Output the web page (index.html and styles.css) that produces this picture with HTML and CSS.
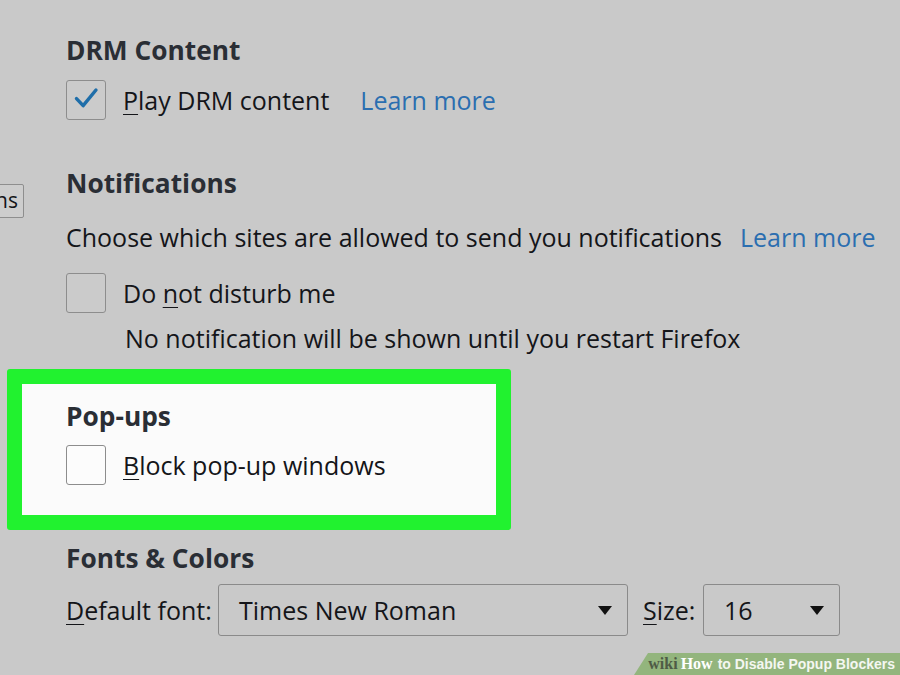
FILE: index.html
```html
<!DOCTYPE html>
<html lang="en">
<head>
<meta charset="utf-8">
<title>Firefox preferences</title>
<link rel="stylesheet" href="styles.css">
</head>
<body>
<div class="page">
  <aside class="sidebar">
    <button class="side-btn">ns</button>
  </aside>
  <main class="content">
    <section class="group drm">
      <h2 class="heading">DRM Content</h2>
      <div class="row check-row">
        <span class="checkbox checked">
          <svg viewBox="0 0 40 40" width="38" height="38"><path d="M10 18.5 L17 26 L30.5 9.5" fill="none" stroke="#1f6ea9" stroke-width="3.6" stroke-linecap="round" stroke-linejoin="round"/></svg>
        </span>
        <span class="label"><u>P</u>lay DRM content</span>
        <a class="link gap-link">Learn more</a>
      </div>
    </section>

    <section class="group notif">
      <h2 class="heading">Notifications</h2>
      <div class="row desc-row">
        <span class="label">Choose which sites are allowed to send you notifications</span>
        <a class="link">Learn more</a>
      </div>
      <div class="row check-row dnd">
        <span class="checkbox"></span>
        <span class="label">Do <u>n</u>ot disturb me</span>
      </div>
      <div class="row note">No notification will be shown until you restart Firefox</div>
    </section>

    <section class="group popups">
      <h2 class="heading">Pop-ups</h2>
      <div class="row check-row">
        <span class="checkbox white"></span>
        <span class="label"><u>B</u>lock pop-up windows</span>
      </div>
    </section>

    <section class="group fonts">
      <h2 class="heading">Fonts &amp; Colors</h2>
      <div class="row font-row">
        <span class="label font-label"><u>D</u>efault font:</span>
        <span class="select font-select"><span class="value">Times New Roman</span><span class="arrow"></span></span>
        <span class="label size-label"><u>S</u>ize:</span>
        <span class="select size-select"><span class="value">16</span><span class="arrow"></span></span>
      </div>
    </section>
  </main>
</div>
<div class="wiki-badge"><span class="wiki">wiki</span><span class="how">How</span><span class="title">to Disable Popup Blockers</span></div>
</body>
</html>
```
FILE: styles.css
```css
html, body {
  margin: 0;
  padding: 0;
}
body {
  background: #c9c9c9;
  font-family: "Open Sans", "Noto Sans", sans-serif;
  color: #141519;
  width: 900px;
  height: 675px;
  overflow: hidden;
  position: relative;
}
.page {
  display: flex;
}
.sidebar {
  width: 66px;
  flex: none;
}
.side-btn {
  margin-top: 184px;
  margin-left: -22px;
  width: 46px;
  height: 34px;
  border: 1px solid #8e8e8e;
  border-radius: 2px;
  background: #cdcdcd;
  font-family: "Open Sans", "Noto Sans", sans-serif;
  font-size: 21px;
  color: #141519;
  text-align: right;
  padding: 0 5px 2px 0;
  line-height: 30px;
}
.content {
  flex: 1;
  display: flex;
  flex-direction: column;
}
.heading {
  margin: 0;
  font-size: 26.3px;
  font-weight: 700;
  color: #2a2e35;
  height: 40px;
  line-height: 40px;
}
.row {
  display: flex;
  align-items: center;
  font-size: 25px;
  white-space: nowrap;
}
.check-row {
  height: 40px;
}
.checkbox {
  width: 38px;
  height: 38px;
  border: 1px solid #8d8d8d;
  border-radius: 3px;
  background: #cbcbcb;
  display: flex;
  align-items: center;
  justify-content: center;
  flex: none;
  margin-right: 17px;
}
.checkbox.white {
  background: #fcfcfc;
}
.checkbox svg {
  display: block;
}
.label u {
  text-decoration-thickness: 1px;
  text-underline-offset: 4px;
}
.link {
  color: #2b6eb0;
  cursor: pointer;
}
.gap-link {
  margin-left: 31px;
}
.drm {
  padding-top: 30px;
}
.drm .heading {
  margin-bottom: 10px;
}
.notif {
  margin-top: 43px;
}
.desc-row {
  height: 40px;
  margin-top: 14px;
}
.desc-row .link {
  margin-left: 18px;
}
.dnd {
  margin-top: 16px;
}
.note {
  height: 40px;
  margin-top: 5px;
  padding-left: 59px;
}
.popups {
  margin-top: 11px;
  margin-left: -59px;
  width: 430px;
  border: 15px solid #21f22f;
  border-radius: 3px;
  background: #fbfbfb;
  padding: 12px 0 30px 44px;
  box-sizing: content-box;
}
.popups .check-row {
  margin-top: 9px;
}
.fonts {
  margin-top: 8px;
}
.font-row {
  margin-top: 6px;
  height: 52px;
}
.font-label {
  width: 152px;
  flex: none;
}
.select {
  height: 50px;
  border: 1px solid #8a8a8a;
  border-radius: 3px;
  display: flex;
  align-items: center;
  box-sizing: content-box;
  flex: none;
}
.font-select {
  width: 408px;
}
.size-select {
  width: 135px;
}
.size-label {
  width: 60px;
  flex: none;
  margin-left: 15px;
}
.select .value {
  padding-left: 20px;
  flex: 1;
}
.arrow {
  width: 0;
  height: 0;
  border-left: 7.5px solid transparent;
  border-right: 7.5px solid transparent;
  border-top: 9px solid #111;
  margin-right: 15px;
}
.wiki-badge {
  position: absolute;
  right: 0;
  bottom: 0;
  height: 22px;
  width: 266px;
  background: #93b57d;
  clip-path: polygon(14px 0, 100% 0, 100% 100%, 0 100%);
  display: flex;
  align-items: center;
  justify-content: flex-end;
  padding-right: 5px;
  box-sizing: border-box;
  font-size: 14px;
  white-space: nowrap;
}
.wiki {
  font-family: "Liberation Serif", serif;
  font-weight: 700;
  color: #4e5b45;
  font-size: 16px;
}
.how {
  font-family: "Liberation Serif", serif;
  font-weight: 700;
  color: #ffffff;
  font-size: 16px;
  margin-left: 3px;
}
.title {
  font-family: "Liberation Sans", sans-serif;
  font-weight: 700;
  color: #f4f7f1;
  margin-left: 5px;
}
```
